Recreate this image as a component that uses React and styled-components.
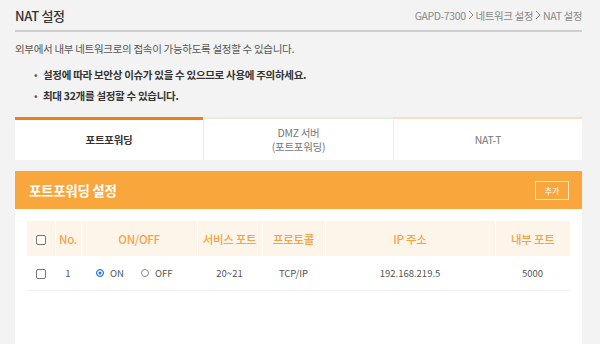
import React, { useState } from "react";
import styled, { createGlobalStyle } from "styled-components";

const GlobalStyle = createGlobalStyle`
  body {
    margin: 0;
    background: #f3f3f3;
    font-family: "Noto Sans CJK KR", "Noto Sans", sans-serif;
    color: #444;
  }
`;

const Page = styled.div`
  width: 567px;
  padding: 0 18px 0 15px;
`;

const TitleBar = styled.div`
  display: flex;
  align-items: center;
  justify-content: space-between;
  height: 30px;
  border-bottom: 2px solid #cfcfcf;
`;

const Title = styled.h1`
  margin: 0;
  font-size: 13px;
  font-weight: 500;
  color: #333;
  letter-spacing: -0.3px;
`;

const Crumbs = styled.div`
  display: flex;
  align-items: center;
  gap: 2px;
  font-size: 10.5px;
  color: #888;
  letter-spacing: -0.4px;
`;

const Desc = styled.p`
  margin: 9px 0 0;
  font-size: 10.5px;
  color: #555;
  letter-spacing: -0.3px;
`;

const Notes = styled.ul`
  margin: 8px 0 0;
  padding: 0 0 0 28px;
  list-style: none;
`;

const Note = styled.li`
  position: relative;
  height: 21px;
  line-height: 21px;
  font-size: 10.5px;
  font-weight: 700;
  color: #333;
  letter-spacing: -0.3px;
  &:before {
    content: "•";
    position: absolute;
    left: -9px;
    font-weight: 400;
    color: #555;
  }
`;

const Tabs = styled.div`
  display: grid;
  grid-template-columns: 188px 190px 189px;
  margin-top: 11px;
  height: 43px;
`;

const Tab = styled.div`
  display: flex;
  align-items: center;
  justify-content: center;
  text-align: center;
  background: #fff;
  border-top: ${(p) => (p.$active ? "3px solid #ef7d1e" : `2px solid ${p.$line}`)};
  border-left: ${(p) => (p.$first ? "none" : "1px solid #ececec")};
  font-size: 10.5px;
  line-height: 14px;
  font-weight: ${(p) => (p.$active ? 700 : 400)};
  color: ${(p) => (p.$active ? "#333" : "#777")};
  letter-spacing: -0.3px;
  cursor: pointer;
`;

const Panel = styled.div`
  margin-top: 11px;
  background: #fff;
`;

const PanelHead = styled.div`
  display: flex;
  align-items: center;
  justify-content: space-between;
  height: 38px;
  padding: 0 13px 0 14px;
  background: #f9a63d;
`;

const PanelTitle = styled.h2`
  margin: 0;
  font-size: 13.5px;
  font-weight: 700;
  color: #fff;
  letter-spacing: -0.3px;
`;

const AddButton = styled.button`
  width: 34px;
  height: 19px;
  padding: 0;
  border: 1px solid #fde6c4;
  background: transparent;
  color: #fff;
  font-family: inherit;
  font-size: 8px;
  cursor: pointer;
`;

const PanelBody = styled.div`
  padding: 12px 12px 0;
  height: 124px;
`;

const Table = styled.table`
  width: 543px;
  border-collapse: collapse;
  table-layout: fixed;
`;

const Th = styled.th`
  height: 35px;
  padding: 0;
  background: #fdf5ea;
  border-left: 1px solid #fffdfa;
  color: #f4a445;
  font-size: 11.5px;
  font-weight: 500;
  letter-spacing: -0.3px;
  &:first-child {
    border-left: none;
  }
`;

const Td = styled.td`
  height: 34px;
  padding: 0;
  text-align: ${(p) => p.$align || "center"};
  border-bottom: 1px solid #f0f0f0;
  font-size: 9.5px;
  color: #555;
`;

const Check = styled.input.attrs({ type: "checkbox" })`
  appearance: none;
  width: 10px;
  height: 10px;
  margin: 0;
  border: 1px solid #777;
  border-radius: 2px;
  background: #fff;
  vertical-align: middle;
`;

const RadioGroup = styled.div`
  display: flex;
  align-items: center;
  gap: 17px;
  padding-left: 15px;
`;

const RadioLabel = styled.label`
  display: flex;
  align-items: center;
  gap: 6px;
  font-size: 9.5px;
  color: #555;
`;

const Radio = styled.input.attrs({ type: "radio" })`
  appearance: none;
  width: 8px;
  height: 8px;
  margin: 0;
  border-radius: 50%;
  border: 1px solid ${(p) => (p.checked ? "#1a73e8" : "#888")};
  background: ${(p) => (p.checked ? "#1a73e8" : "#fff")};
  box-shadow: ${(p) => (p.checked ? "inset 0 0 0 1.5px #fff" : "none")};
`;

const Chevron = () => (
  <svg width="6" height="10" viewBox="0 0 6 10">
    <path d="M1 1l4 4-4 4" fill="none" stroke="#888" strokeWidth="1" />
  </svg>
);

const rules = [
  { id: 1, on: true, service: "20~21", proto: "TCP/IP", ip: "192.168.219.5", inner: "5000" },
];

export default function App() {
  const [tab, setTab] = useState(0);
  const [list, setList] = useState(rules);

  const setOn = (id, on) => setList(list.map((x) => (x.id === id ? { ...x, on } : x)));

  return (
    <>
      <GlobalStyle />
      <Page>
        <TitleBar>
          <Title>NAT 설정</Title>
          <Crumbs>
            <span>GAPD-7300</span>
            <Chevron />
            <span>네트워크 설정</span>
            <Chevron />
            <span>NAT 설정</span>
          </Crumbs>
        </TitleBar>
        <Desc>외부에서 내부 네트워크로의 접속이 가능하도록 설정할 수 있습니다.</Desc>
        <Notes>
          <Note>설정에 따라 보안상 이슈가 있을 수 있으므로 사용에 주의하세요.</Note>
          <Note>최대 32개를 설정할 수 있습니다.</Note>
        </Notes>

        <Tabs>
          <Tab $first $active={tab === 0} $line="#e4efdc" onClick={() => setTab(0)}>
            포트포워딩
          </Tab>
          <Tab $active={tab === 1} $line="#e2efd9" onClick={() => setTab(1)}>
            DMZ 서버
            <br />
            (포트포워딩)
          </Tab>
          <Tab $active={tab === 2} $line="#fddcc6" onClick={() => setTab(2)}>
            NAT-T
          </Tab>
        </Tabs>

        <Panel>
          <PanelHead>
            <PanelTitle>포트포워딩 설정</PanelTitle>
            <AddButton>추가</AddButton>
          </PanelHead>
          <PanelBody>
            <Table>
              <colgroup>
                <col style={{ width: 28 }} />
                <col style={{ width: 26 }} />
                <col style={{ width: 116 }} />
                <col style={{ width: 65 }} />
                <col style={{ width: 63 }} />
                <col style={{ width: 170 }} />
                <col style={{ width: 75 }} />
              </colgroup>
              <thead>
                <tr>
                  <Th>
                    <Check />
                  </Th>
                  <Th>No.</Th>
                  <Th>ON/OFF</Th>
                  <Th>서비스 포트</Th>
                  <Th>프로토콜</Th>
                  <Th>IP 주소</Th>
                  <Th>내부 포트</Th>
                </tr>
              </thead>
              <tbody>
                {list.map((r) => (
                  <tr key={r.id}>
                    <Td>
                      <Check />
                    </Td>
                    <Td>{r.id}</Td>
                    <Td $align="left">
                      <RadioGroup>
                        <RadioLabel>
                          <Radio name={`r${r.id}`} checked={r.on} onChange={() => setOn(r.id, true)} />
                          ON
                        </RadioLabel>
                        <RadioLabel>
                          <Radio name={`r${r.id}`} checked={!r.on} onChange={() => setOn(r.id, false)} />
                          OFF
                        </RadioLabel>
                      </RadioGroup>
                    </Td>
                    <Td>{r.service}</Td>
                    <Td>{r.proto}</Td>
                    <Td>{r.ip}</Td>
                    <Td>{r.inner}</Td>
                  </tr>
                ))}
              </tbody>
            </Table>
          </PanelBody>
        </Panel>
      </Page>
    </>
  );
}
